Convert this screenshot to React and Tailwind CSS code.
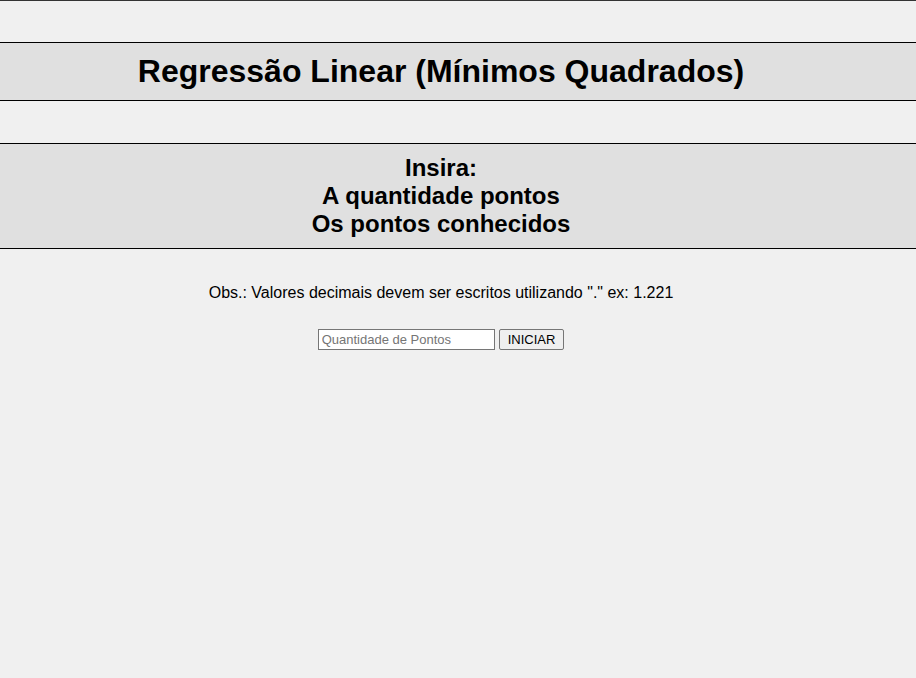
import React from 'react';

export default function App() {
  return (
    <div className="min-h-screen bg-[#f0f0f0] text-black" style={{ fontFamily: '"Liberation Sans", Arial, sans-serif' }}>
      <div className="h-px bg-[#333]" />
      <div className="mt-[41px] border-y border-black bg-[#e0e0e0] py-[10px] pr-[34px] text-center text-[32px] font-bold leading-[37px]">
        Regressão Linear (Mínimos Quadrados)
      </div>
      <div className="mt-[42px] border-y border-black bg-[#e0e0e0] py-[10px] pr-[34px] text-center text-[24px] font-bold leading-[28px]">
        <div>Insira:</div>
        <div>A quantidade pontos</div>
        <div>Os pontos conhecidos</div>
      </div>
      <div className="pr-[34px] text-center">
        <p className="mt-[35px] text-[16px] leading-[18px]">
          Obs.: Valores decimais devem ser escritos utilizando "." ex: 1.221
        </p>
        <div className="mt-[27px] flex items-center justify-center gap-[4px]">
          <input
            type="text"
            placeholder="Quantidade de Pontos"
            className="h-[21px] w-[177px] border border-[#767676] bg-white px-[3px] text-[13px] placeholder:text-[#757575]"
          />
          <button className="h-[21px] rounded-[2px] border border-[#767676] bg-[#efefef] px-[8px] text-[13px]">
            INICIAR
          </button>
        </div>
      </div>
    </div>
  );
}
